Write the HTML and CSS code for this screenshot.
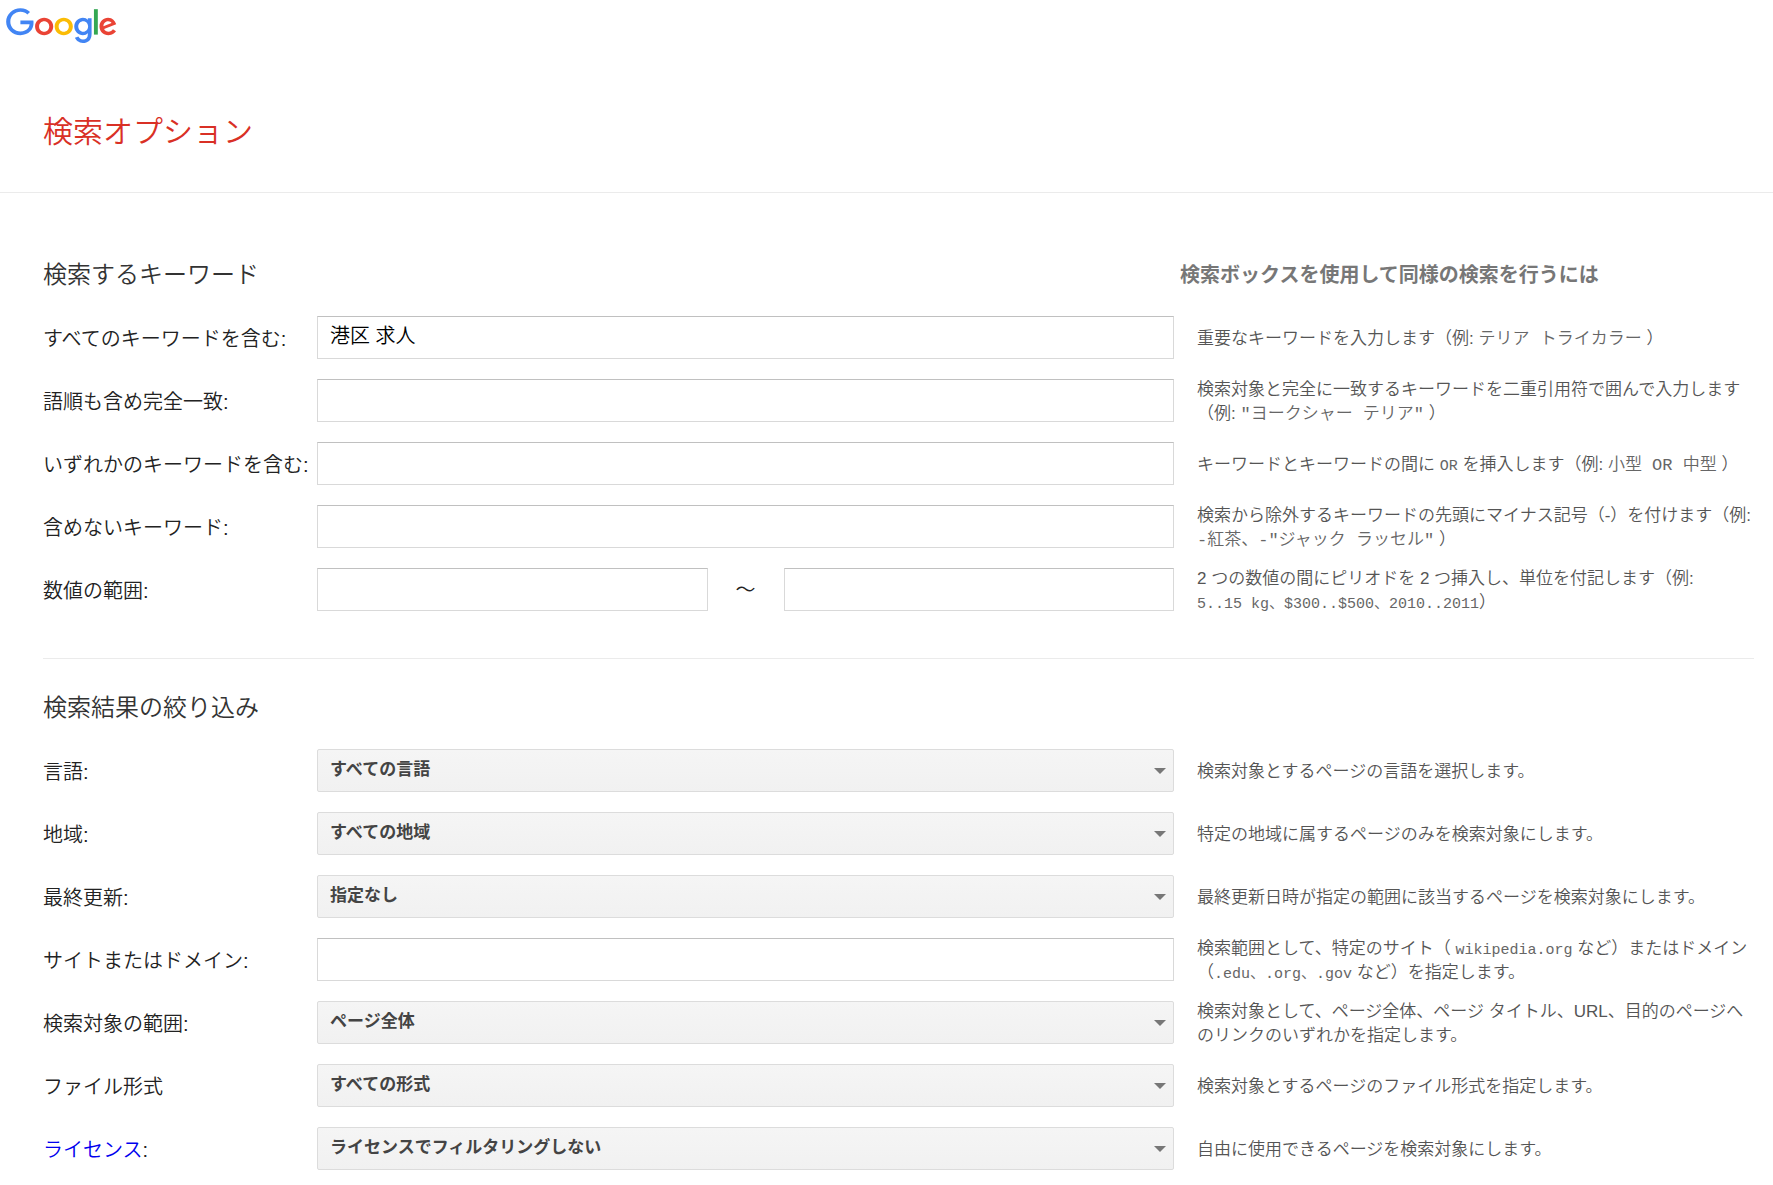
FILE: index.html
```html
<!DOCTYPE html>
<html lang="ja">
<head>
<meta charset="utf-8">
<title>Google 検索オプション</title>
<link rel="stylesheet" href="styles.css">
</head>
<body>
<header class="top">
  <a class="logo" href="#" aria-label="Google">
    <svg width="111" height="36" viewBox="0 0 272 92" preserveAspectRatio="none" aria-hidden="true">
      <path fill="#4285f4" d="M35.29 41.41V32H67c.31 1.64.47 3.58.47 5.68 0 7.06-1.93 15.79-8.15 22.01-6.05 6.3-13.78 9.66-24.02 9.66C16.32 69.35.36 53.89.36 34.91.36 15.93 16.32.47 35.3.47c10.5 0 17.98 4.12 23.6 9.49l-6.64 6.64c-4.03-3.78-9.49-6.72-16.97-6.72-13.86 0-24.7 11.17-24.7 25.03 0 13.86 10.84 25.03 24.7 25.03 8.99 0 14.11-3.61 17.39-6.89 2.66-2.66 4.41-6.46 5.1-11.65l-22.49.01z"/>
      <path fill="#ea4335" d="M115.75 47.18c0 12.77-9.99 22.18-22.25 22.18s-22.25-9.41-22.25-22.18C71.25 34.32 81.24 25 93.5 25s22.25 9.32 22.25 22.18zm-9.74 0c0-7.98-5.79-13.44-12.51-13.44S80.99 39.2 80.99 47.18c0 7.9 5.79 13.44 12.51 13.44s12.51-5.55 12.51-13.44z"/>
      <path fill="#fbbc05" d="M163.75 47.18c0 12.77-9.99 22.18-22.25 22.18s-22.25-9.41-22.25-22.18c0-12.85 9.99-22.18 22.25-22.18s22.25 9.32 22.25 22.18zm-9.74 0c0-7.98-5.79-13.44-12.51-13.44s-12.51 5.46-12.51 13.44c0 7.9 5.79 13.44 12.51 13.44s12.51-5.55 12.51-13.44z"/>
      <path fill="#4285f4" d="M209.75 26.34v39.82c0 16.38-9.66 23.07-21.08 23.07-10.75 0-17.22-7.19-19.66-13.07l8.48-3.53c1.51 3.61 5.21 7.87 11.17 7.87 7.31 0 11.84-4.51 11.84-13v-3.19h-.34c-2.18 2.69-6.38 5.04-11.68 5.04-11.09 0-21.25-9.66-21.25-22.09 0-12.52 10.16-22.26 21.25-22.26 5.29 0 9.49 2.35 11.68 4.96h.34v-3.61h9.25zm-8.56 20.92c0-7.81-5.21-13.52-11.84-13.52-6.72 0-12.35 5.71-12.35 13.52 0 7.73 5.63 13.36 12.35 13.36 6.63 0 11.84-5.63 11.84-13.36z"/>
      <path fill="#34a853" d="M225 3v65h-9.5V3h9.5z"/>
      <path fill="#ea4335" d="M262.02 54.48l7.56 5.04c-2.44 3.61-8.32 9.83-18.48 9.83-12.6 0-22.01-9.74-22.01-22.18 0-13.19 9.49-22.18 20.92-22.18 11.51 0 17.14 9.16 18.98 14.11l1.01 2.52-29.65 12.28c2.27 4.45 5.8 6.72 10.75 6.72 4.96 0 8.4-2.44 10.92-6.14zm-23.27-7.98l19.82-8.23c-1.09-2.77-4.37-4.7-8.23-4.7-4.95 0-11.84 4.37-11.59 12.93z"/>
    </svg>
  </a>
</header>
<div class="title-bar"><h1 class="title">検索オプション</h1></div>
<main>
<form class="options">
  <section class="group">
    <div class="row head">
      <h2 class="group-title">検索するキーワード</h2>
      <h3 class="hint-title">検索ボックスを使用して同様の検索を行うには</h3>
    </div>
    <div class="row">
      <label class="label" for="all">すべてのキーワードを含む:</label>
      <input class="box" id="all" type="text" value="港区 求人">
      <p class="hint">重要なキーワードを入力します（例: <span class="example">テリア トライカラー</span> ）</p>
    </div>
    <div class="row">
      <label class="label" for="exact">語順も含め完全一致:</label>
      <input class="box" id="exact" type="text">
      <p class="hint">検索対象と完全に一致するキーワードを二重引用符で囲んで入力します<br>（例: <span class="example">"ヨークシャー テリア"</span> ）</p>
    </div>
    <div class="row">
      <label class="label" for="any">いずれかのキーワードを含む:</label>
      <input class="box" id="any" type="text">
      <p class="hint">キーワードとキーワードの間に <code class="code">OR</code> を挿入します（例: <span class="example">小型 OR 中型</span> ）</p>
    </div>
    <div class="row">
      <label class="label" for="none">含めないキーワード:</label>
      <input class="box" id="none" type="text">
      <p class="hint">検索から除外するキーワードの先頭にマイナス記号（-）を付けます（例:<br><span class="example">-紅茶、-"ジャック ラッセル"</span> ）</p>
    </div>
    <div class="row">
      <label class="label" for="low">数値の範囲:</label>
      <div class="range">
        <input class="box" id="low" type="text">
        <span class="tilde">～</span>
        <input class="box" id="high" type="text" aria-label="数値の範囲の上限">
      </div>
      <p class="hint">2 つの数値の間にピリオドを 2 つ挿入し、単位を付記します（例:<br><code class="code">5..15 kg、$300..$500、2010..2011</code>）</p>
    </div>
  </section>
  <section class="group narrow">
    <div class="row head">
      <h2 class="group-title">検索結果の絞り込み</h2>
    </div>
    <div class="row">
      <label class="label" for="lang">言語:</label>
      <div class="picker"><select class="select" id="lang"><option>すべての言語</option></select></div>
      <p class="hint">検索対象とするページの言語を選択します。</p>
    </div>
    <div class="row">
      <label class="label" for="region">地域:</label>
      <div class="picker"><select class="select" id="region"><option>すべての地域</option></select></div>
      <p class="hint">特定の地域に属するページのみを検索対象にします。</p>
    </div>
    <div class="row">
      <label class="label" for="updated">最終更新:</label>
      <div class="picker"><select class="select" id="updated"><option>指定なし</option></select></div>
      <p class="hint">最終更新日時が指定の範囲に該当するページを検索対象にします。</p>
    </div>
    <div class="row">
      <label class="label" for="site">サイトまたはドメイン:</label>
      <input class="box" id="site" type="text">
      <p class="hint">検索範囲として、特定のサイト（ <code class="code">wikipedia.org</code> など）またはドメイン<br>（<code class="code">.edu、.org、.gov</code> など）を指定します。</p>
    </div>
    <div class="row">
      <label class="label" for="scope">検索対象の範囲:</label>
      <div class="picker"><select class="select" id="scope"><option>ページ全体</option></select></div>
      <p class="hint">検索対象として、ページ全体、ページ タイトル、URL、目的のページへ<br>のリンクのいずれかを指定します。</p>
    </div>
    <div class="row">
      <label class="label" for="filetype">ファイル形式</label>
      <div class="picker"><select class="select" id="filetype"><option>すべての形式</option></select></div>
      <p class="hint">検索対象とするページのファイル形式を指定します。</p>
    </div>
    <div class="row">
      <label class="label" for="license"><a class="link" href="#">ライセンス</a>:</label>
      <div class="picker"><select class="select" id="license"><option>ライセンスでフィルタリングしない</option></select></div>
      <p class="hint">自由に使用できるページを検索対象にします。</p>
    </div>
  </section>
</form>
</main>
</body>
</html>
```
FILE: styles.css
```css
* { box-sizing: border-box; }

body {
  margin: 0;
  background: #fff;
  color: #222;
  font-family: "Liberation Sans", "Noto Sans CJK JP", sans-serif;
  font-weight: 350;
}

h1, h2, h3, p { margin: 0; font-weight: 350; }

.top { padding: 8px 6px 0; }
.logo { display: block; width: fit-content; }
.logo svg { display: block; }

.title-bar {
  padding: 64px 43px 36px;
  border-bottom: 1px solid #ebebeb;
}
.title {
  color: #d93025;
  font-size: 30px;
  line-height: 48px;
}

.options { padding: 58px 19px 9px 43px; }

.group {
  display: flex;
  flex-direction: column;
  gap: 8px;
}
.narrow {
  margin-top: 41px;
  padding-top: 25px;
  border-top: 1px solid #ebebeb;
}

.row {
  display: grid;
  grid-template-columns: 274px minmax(0, 1fr) 580px;
  align-items: center;
  min-height: 55px;
}
.head { min-height: 45px; margin-bottom: 6px; }

.group-title {
  grid-column: 1 / 3;
  padding-top: 2px;
  color: #333;
  font-size: 24px;
  line-height: 43px;
}
.hint-title {
  padding: 4px 0 0 6px;
  color: #777;
  font-size: 20px;
  font-weight: 700;
  line-height: 41px;
}

.label {
  padding-top: 2px;
  font-size: 20px;
  line-height: 24px;
  white-space: nowrap;
}
.link { color: #00e; text-decoration: none; }

.box {
  width: 100%;
  min-width: 0;
  height: 43px;
  padding: 0 12px 6px;
  border: 1px solid #d9d9d9;
  border-top-color: #c0c0c0;
  background: #fff;
  color: #000;
  font: inherit;
  font-size: 20px;
}

.range {
  display: grid;
  grid-template-columns: 1fr 76px 1fr;
  align-items: center;
}
.tilde { text-align: center; font-size: 20px; line-height: 24px; }

.picker { position: relative; }
.picker::after {
  content: "";
  position: absolute;
  top: 19px;
  right: 8px;
  border: 6px solid transparent;
  border-top-color: #777;
  border-bottom: 0;
  pointer-events: none;
}
.select {
  display: block;
  width: 100%;
  height: 43px;
  padding: 0 32px 2px 12px;
  border: 1px solid #dcdcdc;
  border-radius: 2px;
  background: linear-gradient(#f5f5f5, #f1f1f1);
  color: #444;
  font: inherit;
  font-size: 17px;
  font-weight: 700;
  appearance: none;
}

.hint {
  padding: 2px 0 0 23px;
  color: #555;
  font-size: 17px;
  line-height: 24px;
  white-space: nowrap;
}
.code, .example {
  font-family: "Liberation Mono", "Noto Sans CJK JP", monospace;
  line-height: 20px;
  color: #666;
}
.code { font-size: 15px; }
.example { font-size: 17px; }
```
